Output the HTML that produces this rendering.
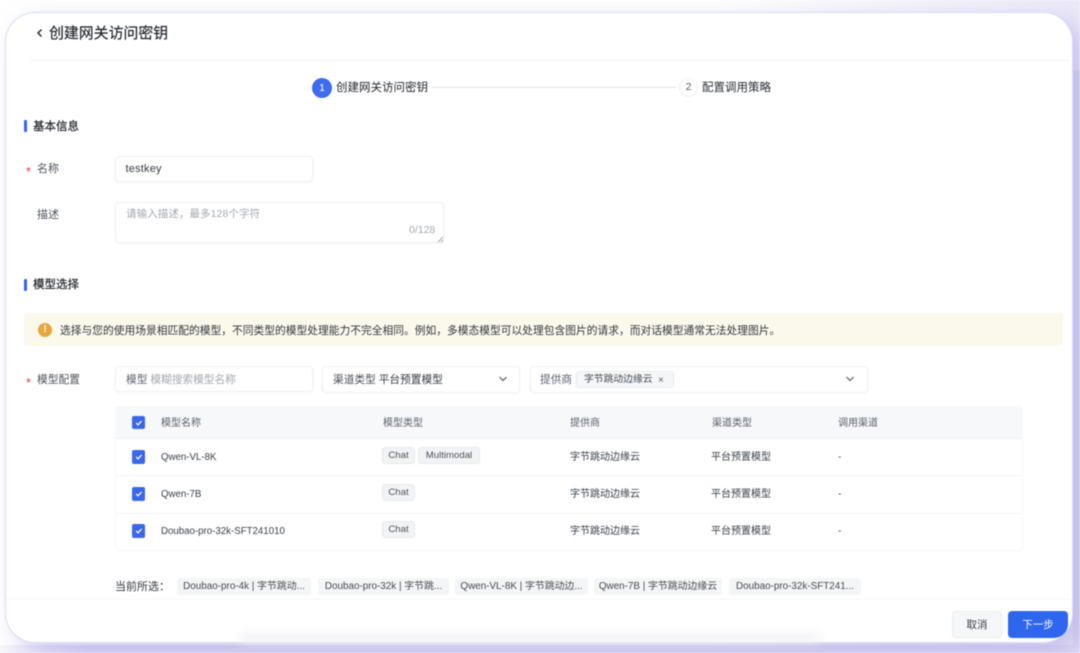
<!DOCTYPE html>
<html lang="zh-CN"><head><meta charset="utf-8"><title>创建网关访问密钥</title>
<style>
html,body{margin:0;padding:0;width:1080px;height:653px;overflow:hidden;background:#fff}
body{font-family:"Liberation Sans","Noto Sans CJK SC",sans-serif;color:#1f2329;position:relative}
#root{position:absolute;left:0;top:0;width:1080px;height:653px;overflow:hidden;filter:blur(.4px)}
.bgfade{position:absolute;left:0;top:0;width:1080px;height:653px;background:linear-gradient(100deg,#fff 0%,#fff 60%,#e6e3f6 100%)}
.card{position:absolute;left:5px;top:12px;width:1066px;height:629px;background:#fff;border:1.5px solid #d6ddfb;border-radius:30px;box-shadow:10px 8px 22px rgba(165,155,225,.5);overflow:hidden}
.a{position:absolute}
.t{position:absolute;white-space:nowrap;line-height:14px;font-size:10.5px}
.box{position:absolute;box-sizing:border-box;background:#fff;border:1px solid #f0f1f3;border-radius:4px;box-shadow:0 1px 2px rgba(0,0,0,.04)}
.bar{position:absolute;left:24px;width:2.5px;height:12px;background:#3565e8;border-radius:1px}
.g{color:#5c6370;font-size:10px}.p{color:#a3a8b0}.d{color:#3a4049;font-size:10px}.n{color:#3a4049;font-size:9.7px}
.h{font-size:11.5px;color:#1f2329;-webkit-text-stroke:.2px #1f2329}
.cb{position:absolute;left:131.5px;width:13.5px;height:13.5px;background:#3b68e8;border-radius:2px}
.cb svg{position:absolute;left:0;top:0}
.tag{position:absolute;box-sizing:border-box;height:17px;line-height:15px;background:#f2f3f5;border:1px solid #e9ebee;border-radius:3px;font-size:9.6px;color:#4c525b;text-align:center;white-space:nowrap}
.sel{position:absolute;box-sizing:border-box;top:578px;height:17px;line-height:18px;background:#f4f5f6;border-radius:3px;font-size:9.9px;color:#444a53;text-align:center;white-space:nowrap}
.line{position:absolute;height:1px;background:#f4f5f6}
.star{position:absolute;left:26px;color:#d9453d;font-size:13px;line-height:14px}
</style></head><body>
<div id="root">
<div class="bgfade"></div>
<div class="a" style="left:0;top:645px;width:1080px;height:8px;background:linear-gradient(90deg,#f7f6fc 0,#dcd8f2 8%,#dcd8f2 100%)"></div>
<div class="a" style="left:1073px;top:70px;width:7px;height:583px;background:#dcd8f2"></div>
<div class="card"></div>

<div class="a" style="left:240px;top:634px;width:580px;height:8px;background:#efeff3;filter:blur(5px);border-radius:8px"></div>

<svg class="a" style="left:35px;top:27px" width="10" height="12" viewBox="0 0 10 12"><path d="M6.500 2.500 3 6l3.500 3.500" fill="none" stroke="#2b2f36" stroke-width="1.500"/></svg>
<div class="t" style="left:49px;top:25px;font-size:14.900px;line-height:18px;color:#1d2129;-webkit-text-stroke:.15px #1d2129">创建网关访问密钥</div>
<div class="line" style="left:30px;top:60px;width:1040px;background:#f4f4f6"></div>

<div class="a" style="left:312px;top:78px;width:20px;height:20px;border-radius:50%;background:#3d6cec;color:#fff;font-size:10.500px;line-height:20px;text-align:center">1</div>
<div class="t" style="left:336px;top:81px;font-size:11.500px;color:#1f2329">创建网关访问密钥</div>
<div class="a" style="left:432px;top:87px;width:244px;height:1px;background:#e2e3e6"></div>
<div class="a" style="left:679px;top:78px;width:19px;height:19px;box-sizing:border-box;border:1px solid #eeeff1;border-radius:50%;background:#fff;color:#555b64;font-size:10.500px;line-height:17px;text-align:center">2</div>
<div class="t" style="left:702px;top:81px;font-size:11.500px;color:#2a2f37">配置调用策略</div>

<div class="bar" style="top:120px"></div>
<div class="t h" style="left:33px;top:120px">基本信息</div>

<div class="star" style="top:165px">*</div>
<div class="t" style="left:37px;top:162px;font-size:11px;color:#4d535c">名称</div>
<div class="box" style="left:115px;top:156px;width:198px;height:26px"></div>
<div class="t" style="left:125.500px;top:162px;font-size:11px;color:#363b44;letter-spacing:.2px">testkey</div>

<div class="t" style="left:37px;top:208px;font-size:11px;color:#4d535c">描述</div>
<div class="box" style="left:115px;top:202px;width:329px;height:41px"></div>
<div class="t p" style="left:126px;top:207px;letter-spacing:.08px">请输入描述，最多128个字符</div>
<div class="t p" style="left:409px;top:223px">0/128</div>
<svg class="a" style="left:437px;top:236px" width="7" height="7" viewBox="0 0 7 7"><path d="M1 6 6 1M4 6 6 4" stroke="#8d9299" stroke-width=".8"/></svg>

<div class="bar" style="top:279px"></div>
<div class="t h" style="left:33px;top:278px">模型选择</div>

<div class="a" style="left:24px;top:313px;width:1039px;height:33px;background:#fbf8ec;border-radius:3px"></div>
<div class="a" style="left:38px;top:323px;width:14px;height:14px;border-radius:50%;background:#e6a73c;color:#fff;font-size:10px;font-weight:bold;line-height:14px;text-align:center">!</div>
<div class="t" style="left:60px;top:324px;font-size:10.750px;color:#33383f">选择与您的使用场景相匹配的模型，不同类型的模型处理能力不完全相同。例如，多模态模型可以处理包含图片的请求，而对话模型通常无法处理图片。</div>

<div class="star" style="top:376px">*</div>
<div class="t" style="left:37px;top:373px;font-size:10.750px;color:#4d535c">模型配置</div>
<div class="box" style="left:115px;top:366px;width:198px;height:26px"></div>
<div class="t" style="left:126px;top:373px;font-size:10.700px;color:#5c6370">模型 <span class="p">模糊搜索模型名称</span></div>
<div class="box" style="left:322px;top:366px;width:198px;height:27px"></div>
<div class="t" style="left:333px;top:373px;font-size:10.700px;color:#4c525b">渠道类型 <span style="color:#363b44">平台预置模型</span></div>
<svg class="a" style="left:497px;top:374px" width="12" height="10" viewBox="0 0 12 10"><path d="M2.500 3 6 6.500 9.500 3" fill="none" stroke="#555b64" stroke-width="1.200"/></svg>
<div class="box" style="left:530px;top:366px;width:338px;height:27px"></div>
<div class="t" style="left:540px;top:373px;font-size:10.700px;color:#5c6370">提供商</div>
<div class="a" style="left:576px;top:371px;width:98px;height:17px;box-sizing:border-box;background:#f5f6f8;border:1px solid #e8eaee;border-radius:3px"></div>
<div class="t" style="left:584px;top:373px;font-size:9.800px;color:#444a53">字节跳动边缘云</div>
<div class="t" style="left:658px;top:374px;font-size:10px;color:#555b64">×</div>
<svg class="a" style="left:844px;top:374px" width="12" height="10" viewBox="0 0 12 10"><path d="M2.500 3 6 6.500 9.500 3" fill="none" stroke="#555b64" stroke-width="1.200"/></svg>

<div class="a" style="left:115px;top:406px;width:908px;height:145px;box-sizing:border-box;border:1px solid #f5f6f7;border-radius:3px"></div>
<div class="a" style="left:115px;top:406px;width:908px;height:33px;background:#f7f8f9;border-bottom:1px solid #f1f2f4;box-sizing:border-box;border-radius:3px 3px 0 0"></div>
<div class="line" style="left:115px;top:475px;width:908px"></div>
<div class="line" style="left:115px;top:513px;width:908px"></div>

<div class="cb" style="top:415.500px"><svg width="13.500" height="13.500" viewBox="0 0 13 13"><path d="M4 6.700 5.800 8.500 9.200 4.800" fill="none" stroke="#fff" stroke-width="1.200"/></svg></div>
<div class="t g" style="left:161px;top:417px">模型名称</div>
<div class="t g" style="left:383px;top:417px">模型类型</div>
<div class="t g" style="left:570px;top:417px">提供商</div>
<div class="t g" style="left:712px;top:417px">渠道类型</div>
<div class="t g" style="left:838px;top:417px">调用渠道</div>

<div class="cb" style="top:450px"><svg width="13.500" height="13.500" viewBox="0 0 13 13"><path d="M4 6.700 5.800 8.500 9.200 4.800" fill="none" stroke="#fff" stroke-width="1.200"/></svg></div>
<div class="t n" style="left:161px;top:451px">Qwen-VL-8K</div>
<div class="tag" style="left:382px;top:447px;width:33px">Chat</div>
<div class="tag" style="left:418px;top:447px;width:62px">Multimodal</div>
<div class="t d" style="left:570px;top:451px">字节跳动边缘云</div>
<div class="t d" style="left:711px;top:451px">平台预置模型</div>
<div class="t d" style="left:838px;top:451px">-</div>

<div class="cb" style="top:487px"><svg width="13.500" height="13.500" viewBox="0 0 13 13"><path d="M4 6.700 5.800 8.500 9.200 4.800" fill="none" stroke="#fff" stroke-width="1.200"/></svg></div>
<div class="t n" style="left:161px;top:488px">Qwen-7B</div>
<div class="tag" style="left:382px;top:484px;width:33px">Chat</div>
<div class="t d" style="left:570px;top:488px">字节跳动边缘云</div>
<div class="t d" style="left:711px;top:488px">平台预置模型</div>
<div class="t d" style="left:838px;top:488px">-</div>

<div class="cb" style="top:524px"><svg width="13.500" height="13.500" viewBox="0 0 13 13"><path d="M4 6.700 5.800 8.500 9.200 4.800" fill="none" stroke="#fff" stroke-width="1.200"/></svg></div>
<div class="t n" style="left:161px;top:525px">Doubao-pro-32k-SFT241010</div>
<div class="tag" style="left:382px;top:521px;width:33px">Chat</div>
<div class="t d" style="left:570px;top:525px">字节跳动边缘云</div>
<div class="t d" style="left:711px;top:525px">平台预置模型</div>
<div class="t d" style="left:838px;top:525px">-</div>

<div class="t" style="left:115px;top:580px;font-size:11px;color:#33383f">当前所选：</div>
<div class="sel" style="left:177px;width:134px">Doubao-pro-4k | 字节跳动...</div>
<div class="sel" style="left:318px;width:131px">Doubao-pro-32k | 字节跳...</div>
<div class="sel" style="left:455px;width:133px">Qwen-VL-8K | 字节跳动边...</div>
<div class="sel" style="left:594px;width:128px">Qwen-7B | 字节跳动边缘云</div>
<div class="sel" style="left:729px;width:132px">Doubao-pro-32k-SFT241...</div>
<div class="line" style="left:6px;top:599px;width:1066px;background:#f6f7f8"></div>

<div class="a" style="left:952px;top:611px;width:50px;height:27px;box-sizing:border-box;background:#f6f7f8;border:1px solid #e9ebee;border-radius:4px;font-size:10.500px;line-height:26px;text-align:center;color:#3a4049">取消</div>
<div class="a" style="left:1008px;top:611px;width:60px;height:27px;background:#2f66ee;border-radius:4px 4px 14px 4px;font-size:10.500px;line-height:28px;text-align:center;color:#fff">下一步</div>
</div>
</body></html>
